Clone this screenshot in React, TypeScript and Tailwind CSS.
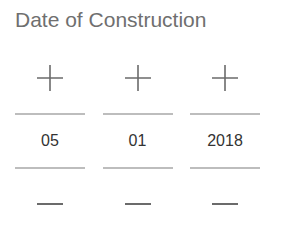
const parts = [
  { key: 'day', value: '05' },
  { key: 'month', value: '01' },
  { key: 'year', value: '2018' },
]

function PlusIcon() {
  return (
    <svg width="26" height="26" viewBox="0 0 26 26">
      <path d="M13 0V26M0 13H26" stroke="#6b6b6b" strokeWidth="1.6" fill="none" />
    </svg>
  )
}

function MinusIcon() {
  return (
    <svg width="26" height="4" viewBox="0 0 26 4">
      <path d="M0 2H26" stroke="#6b6b6b" strokeWidth="2" fill="none" />
    </svg>
  )
}

export default function App() {
  return (
    <div className="w-[285px] h-[233px] bg-white px-[15px] pt-[8px] font-['Liberation_Sans',Arial,sans-serif]">
      <div className="text-[21px] leading-[24px] text-[#6f6f6f]">Date of Construction</div>
      <div className="mt-[26px] flex gap-[17.5px]">
        {parts.map((p) => (
          <div key={p.key} className="w-[70px] flex flex-col items-center">
            <button className="h-[40px] w-full flex items-center justify-center">
              <PlusIcon />
            </button>
            <div className="mt-[15px] h-[2px] w-full bg-[#bdbdbd]"></div>
            <div className="h-[52px] flex items-center justify-center text-[16px] text-[#333]">
              {p.value}
            </div>
            <div className="h-[2px] w-full bg-[#bdbdbd]"></div>
            <button className="h-[70px] w-full flex items-center justify-center">
              <MinusIcon />
            </button>
          </div>
        ))}
      </div>
    </div>
  )
}
